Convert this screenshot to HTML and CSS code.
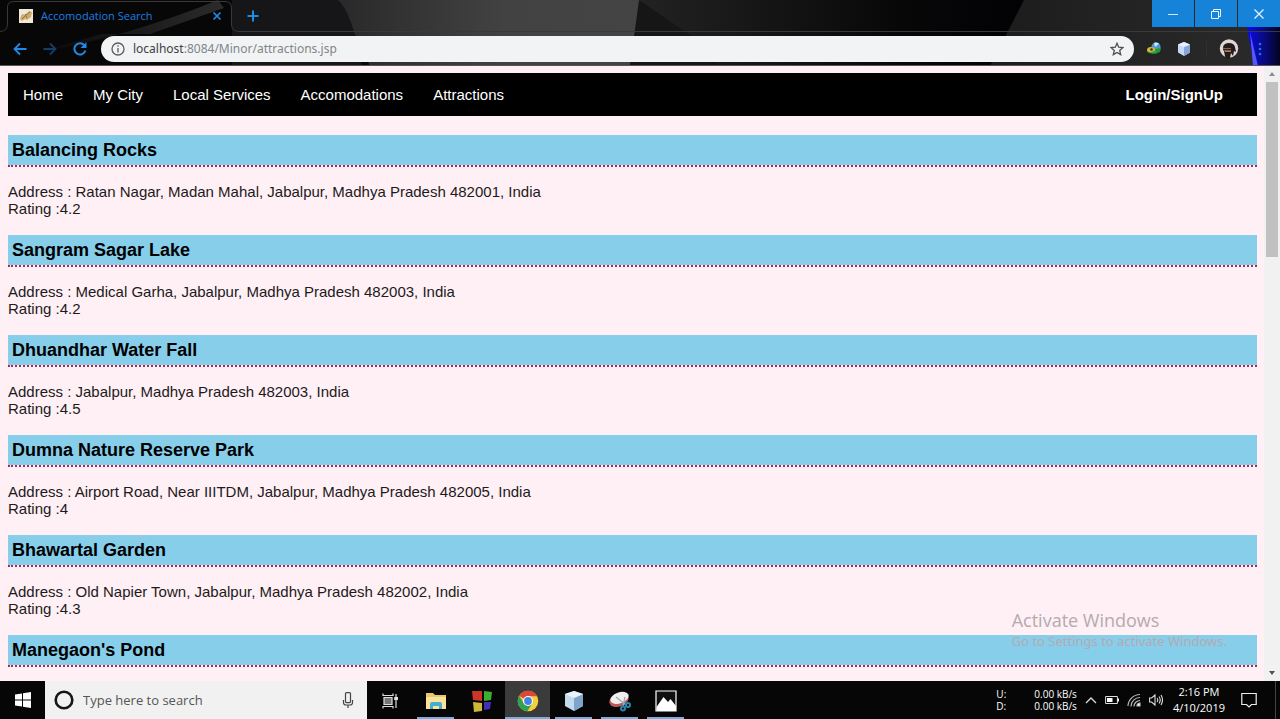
FILE: index.html
```html
<!DOCTYPE html>
<html lang="en">
<head>
<meta charset="utf-8">
<title>Accomodation Search</title>
<link rel="stylesheet" href="styles.css">
</head>
<body>
<header class="browser">
  <svg class="theme" viewBox="0 0 1280 66" preserveAspectRatio="none" aria-hidden="true">
    <defs>
      <linearGradient id="g1"><stop offset="0" stop-color="#29292a"/><stop offset=".55" stop-color="#424242"/><stop offset="1" stop-color="#444"/></linearGradient>
      <linearGradient id="g2"><stop offset="0" stop-color="#232323"/><stop offset=".7" stop-color="#070708"/><stop offset="1" stop-color="#020104"/></linearGradient>
      <linearGradient id="g3"><stop offset="0" stop-color="#1c1c1c"/><stop offset="1" stop-color="#2b2b2b"/></linearGradient>
      <linearGradient id="g4"><stop offset="0" stop-color="#0a0af0"/><stop offset=".45" stop-color="#0a0a8c"/><stop offset="1" stop-color="#030320"/></linearGradient>
      <linearGradient id="g5"><stop offset="0" stop-color="#09090a"/><stop offset="1" stop-color="#2b2b2c"/></linearGradient>
    </defs>
    <rect width="1280" height="66" fill="#070708"/>
    <path d="M338 0H640L630 66H370Z" fill="url(#g1)"/>
    <path d="M232 0H338Q352 12 362 66H232z" fill="#161518"/>
    <path d="M40 52Q130 36 218 0L224 8 150 34H101z" fill="url(#g5)"/>
    <path d="M640 0H1024L996 66H630z" fill="url(#g2)"/>
    <path d="M639 0L690 35 720 66H630z" fill="#161616"/>
    <path d="M1024 0H1280V66H990z" fill="url(#g3)"/>
    <path d="M1247 27H1280V66H1254z" fill="url(#g4)"/>
    <path d="M1250 32L1258 66H1253z" fill="#5557ff"/>
    <path d="M0 31.500Q7.500 31 7.500 24V7Q7.500 1.500 14 1.500H225Q231.500 1.500 231.500 8V24Q231.500 31.500 239 31.500H1280" fill="none" stroke="#39393b"/>
    <path d="M0 65.500H1280" stroke="#555"/>
  </svg>
  <div class="tabstrip">
    <div class="tab">
      <svg class="i14" viewBox="0 0 14 14"><path fill="#eee8da" d="M0 0h14v14H0z"/><path fill="#d0aa6c" d="M1 10l2-5 3 1 4-4 3 1-1 5-4 3-2-1-3 2z"/><path d="M3 10l4-4 4-3M6 5l2 4" stroke="#8d7450" fill="none"/></svg>
      <span class="tab-title">Accomodation Search</span>
      <button class="plain" aria-label="Close tab"><svg class="i10" viewBox="0 0 10 10"><path d="M1.500 1.500l7 7m0-7l-7 7" stroke="#1f8be6" stroke-width="1.700"/></svg></button>
    </div>
    <button class="plain new-tab" aria-label="New tab"><svg class="i12" viewBox="0 0 12 12"><path d="M6 .5v11M.5 6h11" stroke="#1f8be6" stroke-width="2"/></svg></button>
    <div class="window-buttons">
      <button aria-label="Minimize"><svg class="i12" viewBox="0 0 12 12"><path d="M1 6.500h10" stroke="#cfeaff"/></svg></button>
      <button aria-label="Restore"><svg class="i12" viewBox="0 0 12 12" fill="none" stroke="#e6f5ff"><path d="M1.500 3.500h7v7h-7zM3.500 3.500v-2h7v7h-2"/></svg></button>
      <button aria-label="Close"><svg class="i12" viewBox="0 0 12 12"><path d="M1.500 1.500l9 9m0-9l-9 9" stroke="#e6f5ff" stroke-width="1.200"/></svg></button>
    </div>
  </div>
  <div class="toolbar">
    <div class="history">
      <button class="plain" aria-label="Back"><svg class="i14" viewBox="0 0 14 14" fill="none" stroke="#1f8be6" stroke-width="1.800"><path d="M13.500 7H2M7 1.500L1.500 7 7 12.500"/></svg></button>
      <button class="plain" aria-label="Forward"><svg class="i14" viewBox="0 0 14 14" fill="none" stroke="#123f66" stroke-width="1.800"><path d="M.5 7H12M7 1.500L12.500 7 7 12.500"/></svg></button>
      <button class="plain" aria-label="Reload"><svg class="i14" viewBox="0 0 14 14"><path d="M11.300 3.300A5.600 5.600 0 1 0 12.400 8.500" fill="none" stroke="#1f8be6" stroke-width="2"/><path d="M13.500 0v6h-6z" fill="#1f8be6"/></svg></button>
    </div>
    <div class="omnibox">
      <svg class="i14" viewBox="0 0 14 14" fill="none" stroke="#5a5d61" stroke-width="1.300"><circle cx="7" cy="7" r="6"/><path d="M7 6v4.500M7 3.300v1.500"/></svg>
      <a class="url" href="#"><span class="host">localhost</span>:8084/Minor/attractions.jsp</a>
      <button class="plain" aria-label="Bookmark this page"><svg class="i14" viewBox="0 0 14 14" fill="none" stroke="#4d5054" stroke-width="1.300"><path d="M7 1.300l1.700 3.900 4.200.4-3.200 2.800 1 4.200L7 10.400l-3.700 2.200 1-4.200L1.100 5.600l4.200-.4z"/></svg></button>
    </div>
    <div class="extensions">
      <svg class="i16" viewBox="0 0 16 16"><circle cx="10" cy="6" r="4.600" fill="#4d94d8"/><path d="M8 1.800a5 5 0 0 1 5 1L9 6z" fill="#cfe6f3"/><path d="M6 9l9-2-1 4-5 2z" fill="#1c9a2c"/><ellipse cx="5" cy="9" rx="4" ry="3" fill="#d8b62a"/><path d="M1 10q5 3 10-2l-1 4q-6 2-9-2z" fill="#2ea83a"/><circle cx="5.500" cy="8.500" r="1.300" fill="#333"/></svg>
      <svg class="i16" viewBox="0 0 16 16"><path d="M8 1l6 2.500v8L8 15l-6-3.500v-8z" fill="#c6d9f8"/><path d="M8 6l6-2.500v8L8 15z" fill="#88a5da"/><path d="M2 3.500L8 1l6 2.500L8 6z" fill="#e9f1fd"/></svg>
      <span class="divider"></span>
      <svg class="i20" viewBox="0 0 20 20"><circle cx="10" cy="9.500" r="9.200" fill="#ddd8d5"/><path d="M4 8q1-4 6-4t6 4l1 5-2-1-1 5-2-3-1 5-4 1-1-3z" fill="#241b19"/><path d="M4 9h8v4H6z" fill="#a87a62"/><path d="M4 10.500h8" stroke="#29201d" stroke-width="1.500"/></svg>
      <button class="plain" aria-label="Menu"><svg class="i14" viewBox="0 0 14 14" fill="#1979d4"><circle cx="7" cy="2" r="1.300"/><circle cx="7" cy="7" r="1.300"/><circle cx="7" cy="12" r="1.300"/></svg></button>
    </div>
  </div>
</header>

<div class="viewport">
  <main class="page">
    <nav class="menu">
      <a href="#">Home</a><a href="#">My City</a><a href="#">Local Services</a><a href="#">Accomodations</a><a href="#">Attractions</a><a class="login" href="#">Login/SignUp</a>
    </nav>
    <section class="place"><h2>Balancing Rocks</h2><p>Address : Ratan Nagar, Madan Mahal, Jabalpur, Madhya Pradesh 482001, India<br>Rating :4.2</p></section>
    <section class="place"><h2>Sangram Sagar Lake</h2><p>Address : Medical Garha, Jabalpur, Madhya Pradesh 482003, India<br>Rating :4.2</p></section>
    <section class="place"><h2>Dhuandhar Water Fall</h2><p>Address : Jabalpur, Madhya Pradesh 482003, India<br>Rating :4.5</p></section>
    <section class="place"><h2>Dumna Nature Reserve Park</h2><p>Address : Airport Road, Near IIITDM, Jabalpur, Madhya Pradesh 482005, India<br>Rating :4</p></section>
    <section class="place"><h2>Bhawartal Garden</h2><p>Address : Old Napier Town, Jabalpur, Madhya Pradesh 482002, India<br>Rating :4.3</p></section>
    <section class="place"><h2>Manegaon's Pond</h2></section>
  </main>
  <div class="scrollbar" aria-hidden="true">
    <svg class="i8" viewBox="0 0 8 8"><path d="M4 2l3 4H1z" fill="#8d8d8d"/></svg>
    <div class="track"><div class="thumb"></div></div>
    <svg class="i8" viewBox="0 0 8 8"><path d="M4 6l3-4H1z" fill="#505050"/></svg>
  </div>
  <aside class="watermark"><p class="wm-title">Activate Windows</p><p class="wm-text">Go to Settings to activate Windows.</p></aside>
</div>

<footer class="taskbar">
  <button class="start" aria-label="Start"><svg class="i16" viewBox="0 0 16 16" fill="#fff"><path d="M0 2.500l7-1V7.500H0zM8 1.300L16 0v7.500H8zM0 8.500h7v6L0 13.500zM8 8.500h8V16L8 14.700z"/></svg></button>
  <label class="search">
    <svg class="i20" viewBox="0 0 20 20"><circle cx="10" cy="10" r="8.300" fill="none" stroke="#161616" stroke-width="2.600"/></svg>
    <input type="text" placeholder="Type here to search" aria-label="Search">
    <svg class="i16" viewBox="0 0 16 16" fill="none" stroke="#444" stroke-width="1.200"><rect x="5.500" y=".6" width="5" height="10" rx="1"/><path d="M3.500 8v2.500q0 2.500 2.500 2.500h4q2.500 0 2.500-2.500V8M8 13v3"/></svg>
  </label>
  <div class="apps">
    <button class="app" aria-label="Task View"><svg class="i16" viewBox="0 0 16 16" fill="none" stroke="#ddd" stroke-width="1.200"><path d="M2 4.500h8v7H2z" fill="#777"/><path d="M1 .5v2h10v-2M1 15.500v-2h10v2M14 1v14"/><path d="M12.800 4.500h2.600v2h-2.600z" fill="#ddd"/></svg></button>
    <button class="app open" aria-label="File Explorer"><svg class="i22" viewBox="0 0 22 22"><path d="M1 3h7l2 2h11v14H1z" fill="#e9c868"/><path d="M1 7h20v12H1z" fill="#fbe29a"/><path d="M5 19v-5q0-2 2-2h8q2 0 2 2v5h-3v-3H8v3z" fill="#43aed0"/></svg></button>
    <button class="app" aria-label="Tiles"><svg class="i22" viewBox="0 0 22 22"><path d="M1 1h10v10L2 10z" fill="#cc3527"/><path d="M13 1l8 1-1 8-7 1z" fill="#3cae32"/><path d="M2 12l9 1v8l-8 1z" fill="#cdb936"/><path d="M13 12h7l-1 7-6 1z" fill="#4430b4"/></svg></button>
    <button class="app open active" aria-label="Chrome"><svg class="i22" viewBox="0 0 22 22"><circle cx="11" cy="11" r="10.300" fill="#f6cd3c"/><path d="M11 11L2.100 5.850A10.300 10.300 0 0 1 19.900 5.850L20 6.200H11z" fill="#dc4738"/><path d="M11 11l4 2.500-4.500 7.800A10.300 10.300 0 0 1 2.100 5.850L6.700 13z" fill="#32a052"/><circle cx="11" cy="11" r="5" fill="#fff"/><circle cx="11" cy="11" r="3.900" fill="#4482e8"/></svg></button>
    <button class="app open" aria-label="NetBeans"><svg class="i22" viewBox="0 0 22 22"><path d="M11 1l9 3v12l-9 5-9-5V4z" fill="#c3d9ee"/><path d="M11 8l9-4v12l-9 5z" fill="#7fa4ca"/><path d="M2 4l9-3 9 3-9 4z" fill="#e8f2fb"/></svg></button>
    <button class="app open" aria-label="Snipping Tool"><svg class="i22" viewBox="0 0 22 22"><ellipse cx="10" cy="10" rx="10" ry="6.500" transform="rotate(-20 10 10)" fill="#b95b58"/><ellipse cx="10.500" cy="8" rx="9.500" ry="5.500" transform="rotate(-20 10 8)" fill="#f2eeee"/><path d="M7 7l10 8M16 7l-2 9" stroke="#9aaab5" stroke-width="1.300"/><g fill="none" stroke="#2587b5" stroke-width="2"><circle cx="14" cy="18.500" r="2"/><circle cx="19" cy="15" r="2"/></g></svg></button>
    <button class="app open" aria-label="Photos"><svg class="i22" viewBox="0 0 22 22"><path d="M1 1h20v20H1z" fill="#101010" stroke="#fff" stroke-width="1.200"/><path d="M1.500 17l7-10 4.500 5 2.500-3 5.500 7v5H1.500z" fill="#fff"/></svg></button>
  </div>
  <div class="tray">
    <dl class="net"><dt>U:</dt><dd>0.00 kB/s</dd><dt>D:</dt><dd>0.00 kB/s</dd></dl>
    <div class="tray-icons">
      <svg class="i12" viewBox="0 0 12 12"><path d="M1 9l5-5 5 5" fill="none" stroke="#ddd" stroke-width="1.300"/></svg>
      <svg class="i14" viewBox="0 0 14 14"><path d="M.6 3.500h11.800v7H.6z" fill="none" stroke="#ddd"/><path d="M2 5h5.500v4H2zM12.500 5.500H14v3h-1.500z" fill="#fff"/></svg>
      <svg class="i14" viewBox="0 0 14 14" fill="none" stroke="#bbb" stroke-width="1.200"><path d="M1 13A12 12 0 0 1 13 1.500M4 13.500A9 9 0 0 1 13 4.500M7 13.500A6 6 0 0 1 13 7.500"/><path d="M10 13a3 3 0 0 1 3-3v3z" fill="#fff"/></svg>
      <svg class="i14" viewBox="0 0 14 14" fill="none" stroke="#ddd" stroke-width="1.100"><path d="M.6 5h2L6 2v10L2.600 9h-2zM8 5q1.500 2 0 4M10 3.500q2.500 3.500 0 7M12 2q3 5 0 10"/></svg>
    </div>
    <time class="clock">2:16 PM<br>4/10/2019</time>
    <button class="plain" aria-label="Notifications"><svg class="i16" viewBox="0 0 16 16"><path d="M.8 1.500h14.400v11h-4.700L8 15l-2.500-2.500H.8z" fill="none" stroke="#eee" stroke-width="1.200"/></svg></button>
  </div>
  <span class="desktop-edge"></span>
</footer>
</body>
</html>
```
FILE: styles.css
```css
* { box-sizing: border-box; }
body {
  margin: 0;
  height: 100vh;
  display: flex;
  flex-direction: column;
  overflow: hidden;
  background: #fff0f5;
  font-family: "Liberation Sans", Arial, sans-serif;
}
h2, p, dl, dd { margin: 0; }
button { border: 0; padding: 0; font: inherit; cursor: pointer; }
svg { display: block; flex: none; }
.plain { background: none; display: flex; }
.i8 { width: 8px; height: 8px; }
.i10 { width: 10px; height: 10px; }
.i12 { width: 12px; height: 12px; }
.i14 { width: 14px; height: 14px; }
.i16 { width: 16px; height: 16px; }
.i20 { width: 20px; height: 20px; }
.i22 { width: 22px; height: 22px; }

.browser { position: relative; flex: none; font-family: "Open Sans", "Noto Sans", sans-serif; }
.theme { position: absolute; inset: 0; width: 100%; height: 100%; }
.tabstrip { position: relative; display: flex; align-items: center; height: 31px; }
.tab { display: flex; align-items: center; gap: 8px; width: 232px; padding: 0 10px 0 19px; }
.tab-title { flex: 1; color: #1b7fe0; font-size: 11px; line-height: 14px; white-space: nowrap; }
.new-tab { margin-left: 15px; }
.window-buttons { display: flex; align-self: flex-start; gap: 1px; margin-left: auto; }
.window-buttons button { display: grid; place-items: center; width: 42px; height: 27px; background: #1683d8; }
.toolbar { position: relative; display: flex; align-items: center; height: 35px; padding: 0 13px; }
.history { display: flex; gap: 16px; margin-right: 14px; }
.omnibox {
  flex: 1;
  display: flex;
  align-items: center;
  gap: 8px;
  height: 26px;
  padding: 0 10px;
  border-radius: 13px;
  background: #f1f3f4;
}
.url { flex: 1; color: #80868b; font: 12px "Noto Sans", "Open Sans", sans-serif; text-decoration: none; }
.host { color: #3c4043; }
.extensions { display: flex; align-items: center; gap: 14px; margin-left: 12px; }
.extensions .plain { margin: 0; }
.divider { width: 1px; height: 16px; margin-right: -2px; background: #203443; }

.viewport { position: relative; flex: 1; min-height: 0; display: flex; }
.page { flex: 1; overflow: hidden; padding: 7px 7px 0 8px; }
.menu { display: flex; align-items: center; gap: 30px; height: 43px; margin-bottom: 19px; padding: 0 34px 0 15px; background: #000; font-size: 15px; }
.menu a { color: #fff; text-decoration: none; }
.menu .login { margin-left: auto; font-weight: bold; }
.place { margin-bottom: 18px; }
.place h2 {
  margin-bottom: 16px;
  padding: 0 4px;
  border-bottom: 2px dotted #a82a55;
  background: #87ceeb;
  background-clip: padding-box;
  font-size: 18px;
  line-height: 30px;
}
.place p { color: #1c1a1b; font-size: 15px; line-height: 17px; }
.scrollbar { display: flex; flex-direction: column; align-items: center; gap: 4px; width: 16px; padding: 4px 0 4px; background: #f1f1f1; }
.track { flex: 1; width: 12px; }
.thumb { height: 30%; background: #c1c1c1; }
.watermark { position: absolute; right: 53px; bottom: 31px; color: #b4aaaf; font-family: "Noto Sans", "Open Sans", sans-serif; }
.wm-title { font-family: "Open Sans", "Noto Sans", sans-serif; font-size: 18px; line-height: 24px; }
.wm-text { font-size: 13px; line-height: 18px; }

.taskbar { flex: none; display: flex; height: 38px; background: #060606; color: #fff; font-family: "Open Sans", "Noto Sans", sans-serif; }
.start { display: grid; place-items: center; width: 45px; background: none; }
.search { display: flex; align-items: center; gap: 9px; width: 322px; padding: 0 11px 0 9px; background: #f1f1f1; }
.search input { flex: 1; min-width: 0; border: 0; padding: 0; background: none; font: 13px "Open Sans", "Noto Sans", sans-serif; }
.search input::placeholder { color: #555; opacity: 1; }
.apps { display: flex; gap: 1px; }
.app { display: grid; place-items: center; width: 45px; padding-top: 2px; background: none; }
.open { background: linear-gradient(#76b0e0, #76b0e0) center bottom / 37px 2px no-repeat; }
.active { background: linear-gradient(#76b0e0, #76b0e0) center bottom / 45px 2px no-repeat, #3b3b3b; }
.tray { display: flex; align-items: center; margin-left: auto; }
.net { display: grid; grid-template-columns: 38px auto; font-size: 10px; line-height: 12px; }
.tray-icons { display: flex; align-items: center; gap: 8px; margin: 0 10px 0 8px; }
.clock { margin-right: 16px; font-size: 11px; line-height: 16px; text-align: center; }
.desktop-edge { width: 1px; margin: 0 4px 0 18px; background: #444; }
```
